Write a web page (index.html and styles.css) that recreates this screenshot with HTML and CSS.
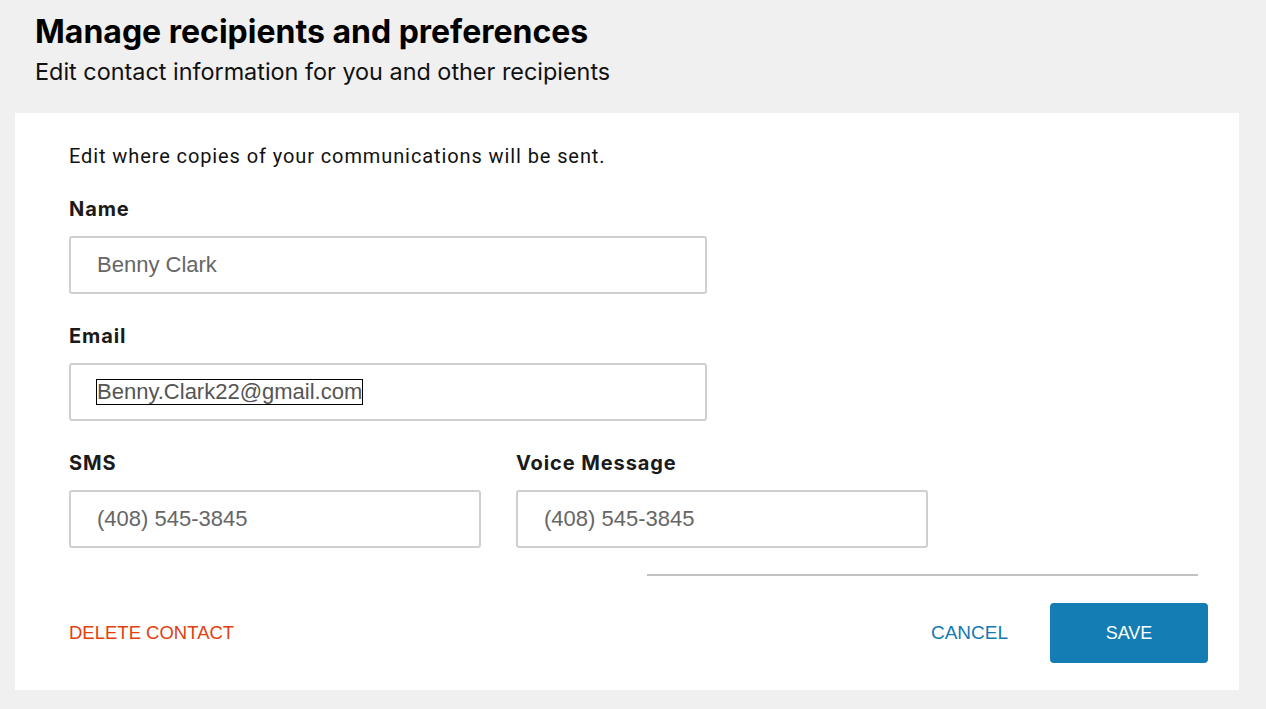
FILE: index.html
```html
<!DOCTYPE html>
<html lang="en">
<head>
<meta charset="utf-8">
<title>Manage recipients and preferences</title>
<link rel="stylesheet" href="styles.css">
</head>
<body>
<header class="page-header">
  <h1 class="title">Manage recipients and preferences</h1>
  <p class="subtitle">Edit contact information for you and other recipients</p>
</header>
<main class="card">
  <p class="intro">Edit where copies of your communications will be sent.</p>
  <div class="group">
    <div class="label">Name</div>
    <div class="field field-wide"><span class="value">Benny Clark</span></div>
  </div>
  <div class="group">
    <div class="label">Email</div>
    <div class="field field-wide"><span class="value value-focus">Benny.Clark22@gmail.com</span></div>
  </div>
  <div class="row">
    <div class="group">
      <div class="label">SMS</div>
      <div class="field field-half"><span class="value">(408) 545-3845</span></div>
    </div>
    <div class="group">
      <div class="label">Voice Message</div>
      <div class="field field-half"><span class="value">(408) 545-3845</span></div>
    </div>
  </div>
  <div class="divider"></div>
  <div class="actions">
    <a class="delete">DELETE CONTACT</a>
    <div class="actions-right">
      <a class="cancel">CANCEL</a>
      <button class="save">SAVE</button>
    </div>
  </div>
</main>
</body>
</html>
```
FILE: styles.css
```css
* { box-sizing: border-box; }
html, body { margin: 0; padding: 0; }
body {
  background: #f0f0f0;
  font-family: "Liberation Sans", Arial, sans-serif;
  color: #000;
  width: 1266px;
  height: 709px;
  overflow: hidden;
}
.page-header {
  padding: 14px 0 0 35px;
  height: 113px;
}
.title {
  margin: 0;
  font-family: Inter, "Liberation Sans", sans-serif;
  font-size: 32px;
  line-height: 36px;
  font-weight: 700;
  color: #000;
}
.subtitle {
  margin: 9px 0 0;
  font-family: Inter, "Liberation Sans", sans-serif;
  font-size: 23.4px;
  line-height: 26px;
  color: #111;
}
.card {
  margin-left: 15px;
  width: 1224px;
  height: 577px;
  background: #fff;
  padding: 32px 31px 0 54px;
}
.intro {
  margin: 0;
  font-family: Roboto, "Liberation Sans", sans-serif;
  font-size: 20px;
  letter-spacing: 0.9px;
  line-height: 22px;
  color: #111;
}
.group { margin-top: 31px; }
.row { display: flex; gap: 35px; }
.label {
  font-family: Inter, "Liberation Sans", sans-serif;
  font-size: 20px;
  letter-spacing: 0.9px;
  line-height: 22px;
  font-weight: 700;
  color: #1a1a1a;
  margin-bottom: 16px;
}
.field {
  height: 58px;
  border: 2px solid #cfcfcf;
  border-radius: 3px;
  display: flex;
  align-items: center;
  padding-left: 26px;
}
.field-wide { width: 638px; }
.field-half { width: 412px; }
.value {
  font-size: 22px;
  line-height: 24px;
  color: #666;
}
.value-focus {
  outline: 1px solid #000;
  color: #555;
}
.divider {
  margin: 26px 10px 0 auto;
  width: 551px;
  height: 2px;
  background: #c2c2c2;
}
.actions {
  margin-top: 27px;
  display: flex;
  align-items: center;
  justify-content: space-between;
}
.delete {
  font-size: 18.5px;
  color: #e1400f;
}
.actions-right {
  display: flex;
  align-items: center;
  gap: 42px;
}
.cancel {
  font-size: 19px;
  color: #1479b2;
}
.save {
  width: 158px;
  height: 60px;
  border: none;
  border-radius: 4px;
  background: #137db4;
  color: #fff;
  font-family: "Liberation Sans", Arial, sans-serif;
  font-size: 18px;
}
```
